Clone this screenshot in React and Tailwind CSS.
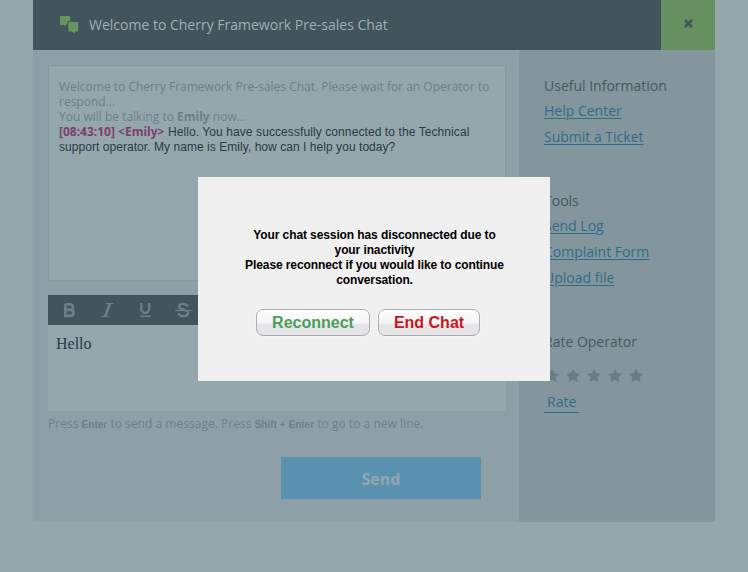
const open = "font-['Open_Sans',sans-serif]";
const arial = "font-['Liberation_Sans',Arial,sans-serif]";

function ChatIcon() {
  return (
    <svg className="h-[18px] w-[19px] shrink-0" viewBox="0 0 19 18" fill="#66955f">
      <path d="M1 0H9.3Q10.3 0 10.3 1V5H8.8Q7.3 5 7.3 6.5V7.6L4.7 10.5L4.2 8.9H1Q0 8.9 0 7.9V1Q0 0 1 0Z" />
      <path d="M9.3 6H17.2Q18.2 6 18.2 7V14.4Q18.2 15.4 17.2 15.4H15L14.6 17.6L11.8 15.4H9.3Q8.3 15.4 8.3 14.4V7Q8.3 6 9.3 6Z" />
    </svg>
  );
}

function Star() {
  return (
    <svg className="h-[13px] w-[14px]" viewBox="0 0 14 13" fill="#697d84">
      <path d="M7 0L9.2 4.1L14 4.9L10.7 8.2L11.5 13L7 10.9L2.5 13L3.3 8.2L0 4.9L4.8 4.1Z" />
    </svg>
  );
}

function Toolbar() {
  return (
    <div className="flex h-[30px] bg-[#42545c]">
      <svg className="h-[30px] w-[160px]" viewBox="0 0 160 30" fill="none" stroke="#6b7f87">
        <path d="M17.3 9.3H21.8C25.8 9.3 25.8 14.7 22.2 14.8H17.3M17.3 14.8H22.5C26.6 15 26.6 20.9 22 20.9H17.3V9.3" strokeWidth="2.8" />
        <path d="M61.7 9L57.3 21.3" strokeWidth="2.8" />
        <path d="M57.5 8.7H65.5M53.2 21.4H61" strokeWidth="1.3" />
        <path d="M93.3 8V13.8C93.3 19.4 101.2 19.4 101.2 13.8V8" strokeWidth="2.3" />
        <path d="M92 21.3H103" strokeWidth="1.6" />
        <path d="M139.7 11.5C138.5 7.8 130.9 7.9 131.1 11.7C131.3 15.3 140.2 13.8 140.1 18C140 22.2 131.3 22 130.5 18" strokeWidth="2.3" />
        <path d="M127 15.5H144.5" strokeWidth="1.2" />
      </svg>
    </div>
  );
}

function SideLink({ children }) {
  return (
    <a className="block h-[26px] whitespace-nowrap text-[14px] leading-[26px] text-[#2f6d87] underline decoration-1 underline-offset-[1.5px]">
      {children}
    </a>
  );
}

function Conversation() {
  return (
    <div className="h-[216px] border border-[#8599a1] bg-[#94a7ad] pl-[10px] pt-[13px] text-[12px] leading-[15px] text-[#6c8087]">
      <p className="whitespace-nowrap">
        Welcome to Cherry Framework Pre-sales Chat. Please wait for an Operator to
        <br />
        respond...
      </p>
      <p className="whitespace-nowrap">You will be talking to <b>Emily</b> now...</p>
      <p className={`whitespace-nowrap text-[#283b45] ${arial}`}>
        <b className="font-['Open_Sans',sans-serif] text-[#803c70]">[08:43:10] &lt;Emily&gt;</b>
        <span className="tracking-[0.09px]"> Hello. You have successfully connected to the Technical</span>
        <br />
        <span className="tracking-[0.05px]">support operator. My name is Emily, how can I help you today?</span>
      </p>
    </div>
  );
}

function Dialog() {
  const button =
    "h-[27px] rounded-[7px] border border-[#a9acb2] bg-linear-to-b from-white from-0% via-[#f4f4f5] via-50% to-[#e5e5e8] to-60% text-[16px] leading-[25px] font-bold shadow-[0_0_2px_#fff]";
  return (
    <div className={`absolute left-[198px] top-[177px] h-[204px] w-[352px] bg-[#f0f0f0] pt-[51px] text-center ${arial}`}>
      <p className="whitespace-nowrap pl-px text-[12px] leading-[15px] font-bold tracking-[-0.1px] text-black">
        Your chat session has disconnected due to
        <br />
        your inactivity
        <br />
        Please reconnect if you would like to continue
        <br />
        conversation.
      </p>
      <div className="mt-[21px] flex gap-2 pl-[58px]">
        <button className={`w-[114px] text-[#4b9d59] ${button}`}>Reconnect</button>
        <button className={`w-[102px] text-[#c81622] ${button}`}>End Chat</button>
      </div>
    </div>
  );
}

export default function App() {
  return (
    <div className={`relative h-[572px] w-[748px] overflow-hidden bg-[#94a7ad] ${open}`}>
      <div className="ml-[33px] w-[682px]">
        <header className="flex h-[50px] bg-[#42545c]">
          <div className="flex flex-1 items-center pl-[27px]">
            <ChatIcon />
            <h1 className="mb-[2px] ml-[10px] whitespace-nowrap text-[14px] text-[#9eafb5]">
              Welcome to Cherry Framework Pre-sales Chat
            </h1>
          </div>
          <button className="flex w-[54px] items-center justify-center bg-[#66905f]">
            <svg className="mb-[3px] h-[9px] w-[9px]" viewBox="0 0 9 9" stroke="#42545c" strokeWidth="2.6">
              <path d="M1 1L8 8M8 1L1 8" />
            </svg>
          </button>
        </header>
        <div className="flex h-[472px]">
          <main className="w-[486px] bg-[#8da0a8] pl-[15px] pr-[13px] pt-[15px]">
            <Conversation />
            <div className="mt-[14px]">
              <Toolbar />
              <div className="h-[86px] bg-[#94a7ad] pl-[8px] pt-[9px] font-['Liberation_Serif',serif] text-[16px] leading-[20px] text-[#283b45]">
                Hello
              </div>
            </div>
            <p className="mt-[5px] whitespace-nowrap text-[12px] leading-[16px] tracking-[0.025px] text-[#6c8087]">
              Press <b className="font-['Liberation_Sans',sans-serif] text-[10px]">Enter</b> to send a message. Press{" "}
              <b className="font-['Liberation_Sans',sans-serif] text-[10px]">Shift + Enter</b> to go to a new line.
            </p>
            <button className="ml-[233px] mt-[24px] block h-[42px] w-[200px] bg-[#5a90b0] pt-px text-[16px] font-bold text-[#94a7ad]">
              Send
            </button>
          </main>
          <aside className="w-[196px] bg-[#84969d] pl-[25px] pt-[23px] text-[14px] text-[#465860]">
            <section className="h-[115px]">
              <h2 className="h-[25px] leading-[26px]">Useful Information</h2>
              <SideLink>Help Center</SideLink>
              <SideLink>Submit a Ticket</SideLink>
            </section>
            <section className="h-[141px]">
              <h2 className="h-[25px] leading-[26px]">Tools</h2>
              <SideLink>Send Log</SideLink>
              <SideLink>Complaint Form</SideLink>
              <SideLink>Upload file</SideLink>
            </section>
            <section>
              <h2 className="h-[25px] leading-[26px]">Rate Operator</h2>
              <div className="mt-[15px] flex gap-[7px] pl-px">
                <Star />
                <Star />
                <Star />
                <Star />
                <Star />
              </div>
              <a className="mt-[11px] block h-[20px] w-[35px] border-b border-[#2f6d87] pl-[3px] leading-[18px] text-[#2f6d87]">
                Rate
              </a>
            </section>
          </aside>
        </div>
      </div>
      <Dialog />
    </div>
  );
}
